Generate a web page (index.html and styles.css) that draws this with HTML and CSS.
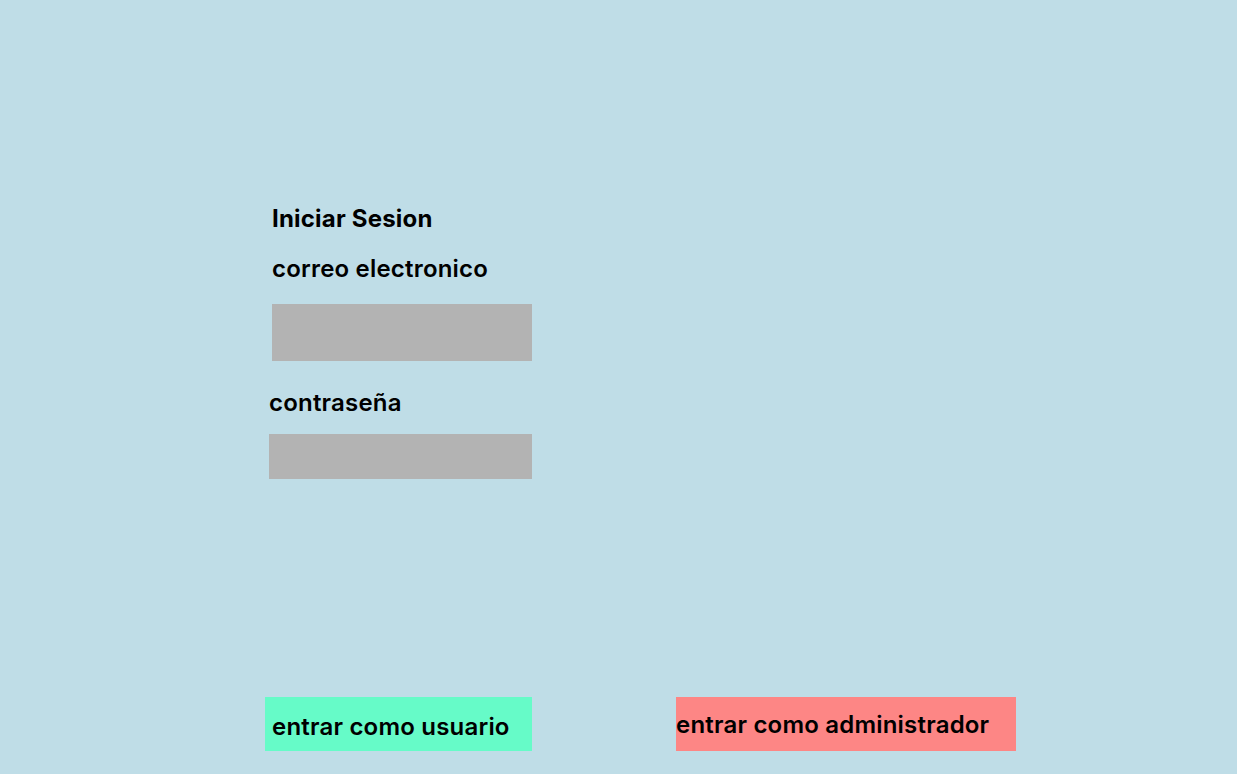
FILE: index.html
```html
<!DOCTYPE html>
<html lang="es">
<head>
    <meta charset="UTF-8">
    <meta name="viewport" content="width=device-width, initial-scale=1.0">
    <title>Iniciar Sesion</title>
    <link rel="stylesheet" href="styles.css">
</head>
<body>
    <!-- formulario -->
    <div class="login">
        <h1 class="title">Iniciar Sesion</h1>
        <label class="label label-email" for="email">correo electronico</label>
        <input class="field field-email" id="email" type="email">
        <label class="label label-pass" for="pass">contraseña</label>
        <input class="field field-pass" id="pass" type="password">
    </div>

    <!-- botones -->
    <div class="actions">
        <button class="btn btn-user">entrar como usuario</button>
        <button class="btn btn-admin">entrar como administrador</button>
    </div>
</body>
</html>
```

FILE: styles.css
```css
body {
    font-family: 'Inter', 'Liberation Sans', sans-serif;
    background-color: #bfdde7;
    margin: 0;
    height: 774px;
    overflow: hidden;
    color: #000;
}

.login {
    display: flex;
    flex-direction: column;
    align-items: flex-start;
    padding-top: 204px;
    margin-left: 265px;
    width: 267px;
}

.title,
.label {
    font-size: 24px;
    font-weight: 600;
    line-height: 29px;
    letter-spacing: 0.2px;
    margin: 0;
}

.title {
    font-weight: 700;
    margin-left: 7px;
}

.label-email {
    margin-top: 21px;
    margin-left: 7px;
}

.field {
    display: block;
    border: none;
    background: #b3b3b3;
    padding: 0;
    outline: none;
}

.field-email {
    margin-top: 21px;
    margin-left: 7px;
    width: 260px;
    height: 57px;
}

.label-pass {
    margin-top: 27px;
    margin-left: 4px;
}

.field-pass {
    margin-top: 17px;
    margin-left: 4px;
    width: 263px;
    height: 45px;
}

.actions {
    display: flex;
    gap: 144px;
    margin-top: 218px;
    margin-left: 265px;
}

.btn {
    border: none;
    height: 54px;
    font-family: inherit;
    font-size: 24px;
    font-weight: 600;
    line-height: 29px;
    letter-spacing: 0.2px;
    text-align: left;
    color: #000;
    display: flex;
    align-items: flex-start;
    cursor: pointer;
}

.btn-user {
    width: 267px;
    background: #66fbc8;
    padding: 15px 0 0 7px;
}

.btn-admin {
    width: 340px;
    background: #fd8685;
    padding: 13px 0 0 0;
}
```
